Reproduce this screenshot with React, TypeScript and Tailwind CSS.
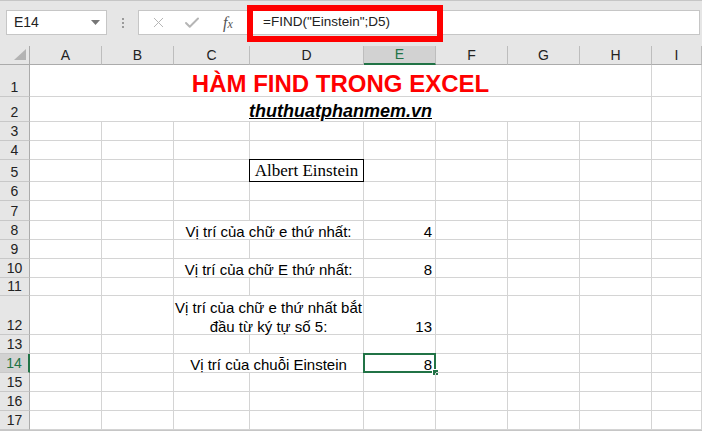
import React from 'react';
import { X, Check } from 'lucide-react';

type Cell = {
  span?: number;
  content?: React.ReactNode;
  cls?: string;
  overlay?: 'box' | 'sel';
};

const COLS = ['A', 'B', 'C', 'D', 'E', 'F', 'G', 'H', 'I'];
const ROWS = Array.from({ length: 17 }, (_, i) => i + 1);

const empty = (n: number): Cell[] => Array.from({ length: n }, () => ({}));
const num = (v: string, overlay?: 'sel'): Cell => ({ cls: 'justify-end pr-[3px]', content: v, overlay });

const SPECIAL: Record<number, Cell[]> = {
  1: [
    {
      span: 8,
      cls: 'justify-center',
      content: <span className="text-[24px] font-bold leading-none text-[#ff0000]">HÀM FIND TRONG EXCEL</span>,
    },
    {},
  ],
  2: [
    {
      span: 8,
      cls: 'justify-center pb-px',
      content: <span className="text-[18px] font-bold italic leading-none underline">thuthuatphanmem.vn</span>,
    },
    {},
  ],
  5: [
    ...empty(3),
    {
      overlay: 'box',
      cls: 'justify-center pb-[2px]',
      content: <span className="font-['Liberation_Serif','Times_New_Roman',serif] text-[17px] leading-none">Albert Einstein</span>,
    },
    ...empty(5),
  ],
  8: [...empty(2), { span: 2, cls: 'justify-center', content: 'Vị trí của chữ e thứ nhất:' }, num('4'), ...empty(4)],
  10: [...empty(2), { span: 2, cls: 'justify-center', content: 'Vị trí của chữ E thứ nhất:' }, num('8'), ...empty(4)],
  12: [
    ...empty(2),
    {
      span: 2,
      cls: 'justify-center text-center',
      content: (
        <span className="translate-y-[2px] whitespace-nowrap leading-[19px]">
          Vị trí của chữ e thứ nhất bắt
          <br />
          đầu từ ký tự số 5:
        </span>
      ),
    },
    num('13'),
    ...empty(4),
  ],
  14: [...empty(2), { span: 2, cls: 'justify-center', content: 'Vị trí của chuỗi Einstein' }, num('8', 'sel'), ...empty(4)],
};

export default function App() {
  return (
    <div className="h-[431px] w-[702px] overflow-hidden bg-white font-['Liberation_Sans',Arial,sans-serif] text-black">
      {/* Formula bar */}
      <div className="relative flex h-[46px] items-start border-t border-[#c6c6c6] bg-[#e6e6e6] pt-[9px]">
        <div className="ml-[6px] flex h-[25px] w-[101px] items-center justify-between border border-[#c6c6c6] bg-white pl-[7px] pr-[6px] text-[14px] text-[#222]">
          <span>E14</span>
          <svg width="9" height="5" viewBox="0 0 9 5">
            <polygon points="0,0 9,0 4.5,5" fill="#767676" />
          </svg>
        </div>
        <div className="flex h-[25px] w-[31px] flex-col items-center justify-center gap-[2px]">
          <span className="h-[2px] w-[2px] bg-[#9a9a9a]" />
          <span className="h-[2px] w-[2px] bg-[#9a9a9a]" />
          <span className="h-[2px] w-[2px] bg-[#9a9a9a]" />
        </div>
        <div className="flex h-[25px] w-[110px] items-center border border-[#c6c6c6] bg-white">
          <X className="ml-[11px] h-[17px] w-[17px] text-[#b5b5b5]" strokeWidth={1.4} />
          <Check className="ml-[16px] h-[18px] w-[18px] text-[#b5b5b5]" strokeWidth={2.6} />
          <span className="ml-[22px] font-['Liberation_Serif',serif] text-[16px] italic leading-none text-[#555]">
            f<span className="text-[12px]">x</span>
          </span>
        </div>
        <div className="mr-[2px] flex h-[25px] flex-1 items-center border border-l-0 border-[#c6c6c6] bg-white pl-[15px] text-[13.5px] text-[#222]">
          =FIND("Einstein";D5)
        </div>
        <div className="absolute left-[247px] top-[4px] h-[37px] w-[196px] border-[6px] border-[#ff0000]" />
      </div>

      {/* Sheet grid */}
      <div className="grid grid-cols-[30px_72px_72px_76px_114px_72px_72px_72px_72px_50px] grid-rows-[19px_32px_25px_19px_19px_22px_19px_20px_19px_19px_19px_18px_39px_19px_19px_19px_19px_19px] border-b border-[#c6c6c6]">
        <div className="relative border-b border-r border-[#ababab] bg-[#e6e6e6]">
          <svg className="absolute bottom-[4px] right-[3px]" width="12" height="11" viewBox="0 0 12 11">
            <polygon points="12,0 12,11 0,11" fill="#b3b3b3" />
          </svg>
        </div>
        {COLS.map((c) =>
          c === 'E' ? (
            <div
              key={c}
              className="flex items-center justify-center border-b-2 border-r border-b-[#217346] border-r-[#bdbdbd] bg-[#d2d2d2] text-[14px] text-[#217346]"
            >
              {c}
            </div>
          ) : (
            <div
              key={c}
              className="flex items-center justify-center border-b border-r border-b-[#ababab] border-r-[#bdbdbd] bg-[#e6e6e6] text-[14px] text-[#222]"
            >
              {c}
            </div>
          )
        )}

        {ROWS.map((r) => {
          const cells = SPECIAL[r] ?? empty(9);
          return (
            <React.Fragment key={r}>
              {r === 14 ? (
                <div className="flex items-end justify-center border-b border-r-2 border-b-[#c8c8c8] border-r-[#217346] bg-[#d2d2d2] pb-[2px] text-[14px] leading-none text-[#217346]">
                  {r}
                </div>
              ) : (
                <div className="flex items-end justify-center border-b border-r border-b-[#c8c8c8] border-r-[#ababab] bg-[#e6e6e6] pb-[2px] text-[14px] leading-none text-[#222]">
                  {r}
                </div>
              )}
              {cells.map((cell, i) => (
                <div
                  key={i}
                  className={`relative flex items-end border-b border-r border-[#d4d4d4] text-[15px] leading-none ${
                    cell.span === 8 ? 'col-span-8' : cell.span === 2 ? 'col-span-2' : ''
                  } ${cell.cls ?? ''}`}
                >
                  {cell.content}
                  {cell.overlay === 'box' && <div className="absolute -inset-px border border-black" />}
                  {cell.overlay === 'sel' && (
                    <>
                      <div className="absolute -inset-px border-2 border-[#217346]" />
                      <div className="absolute -bottom-[4px] -right-[4px] h-[7px] w-[7px] border border-white bg-[#217346]" />
                    </>
                  )}
                </div>
              ))}
            </React.Fragment>
          );
        })}
      </div>
    </div>
  );
}
